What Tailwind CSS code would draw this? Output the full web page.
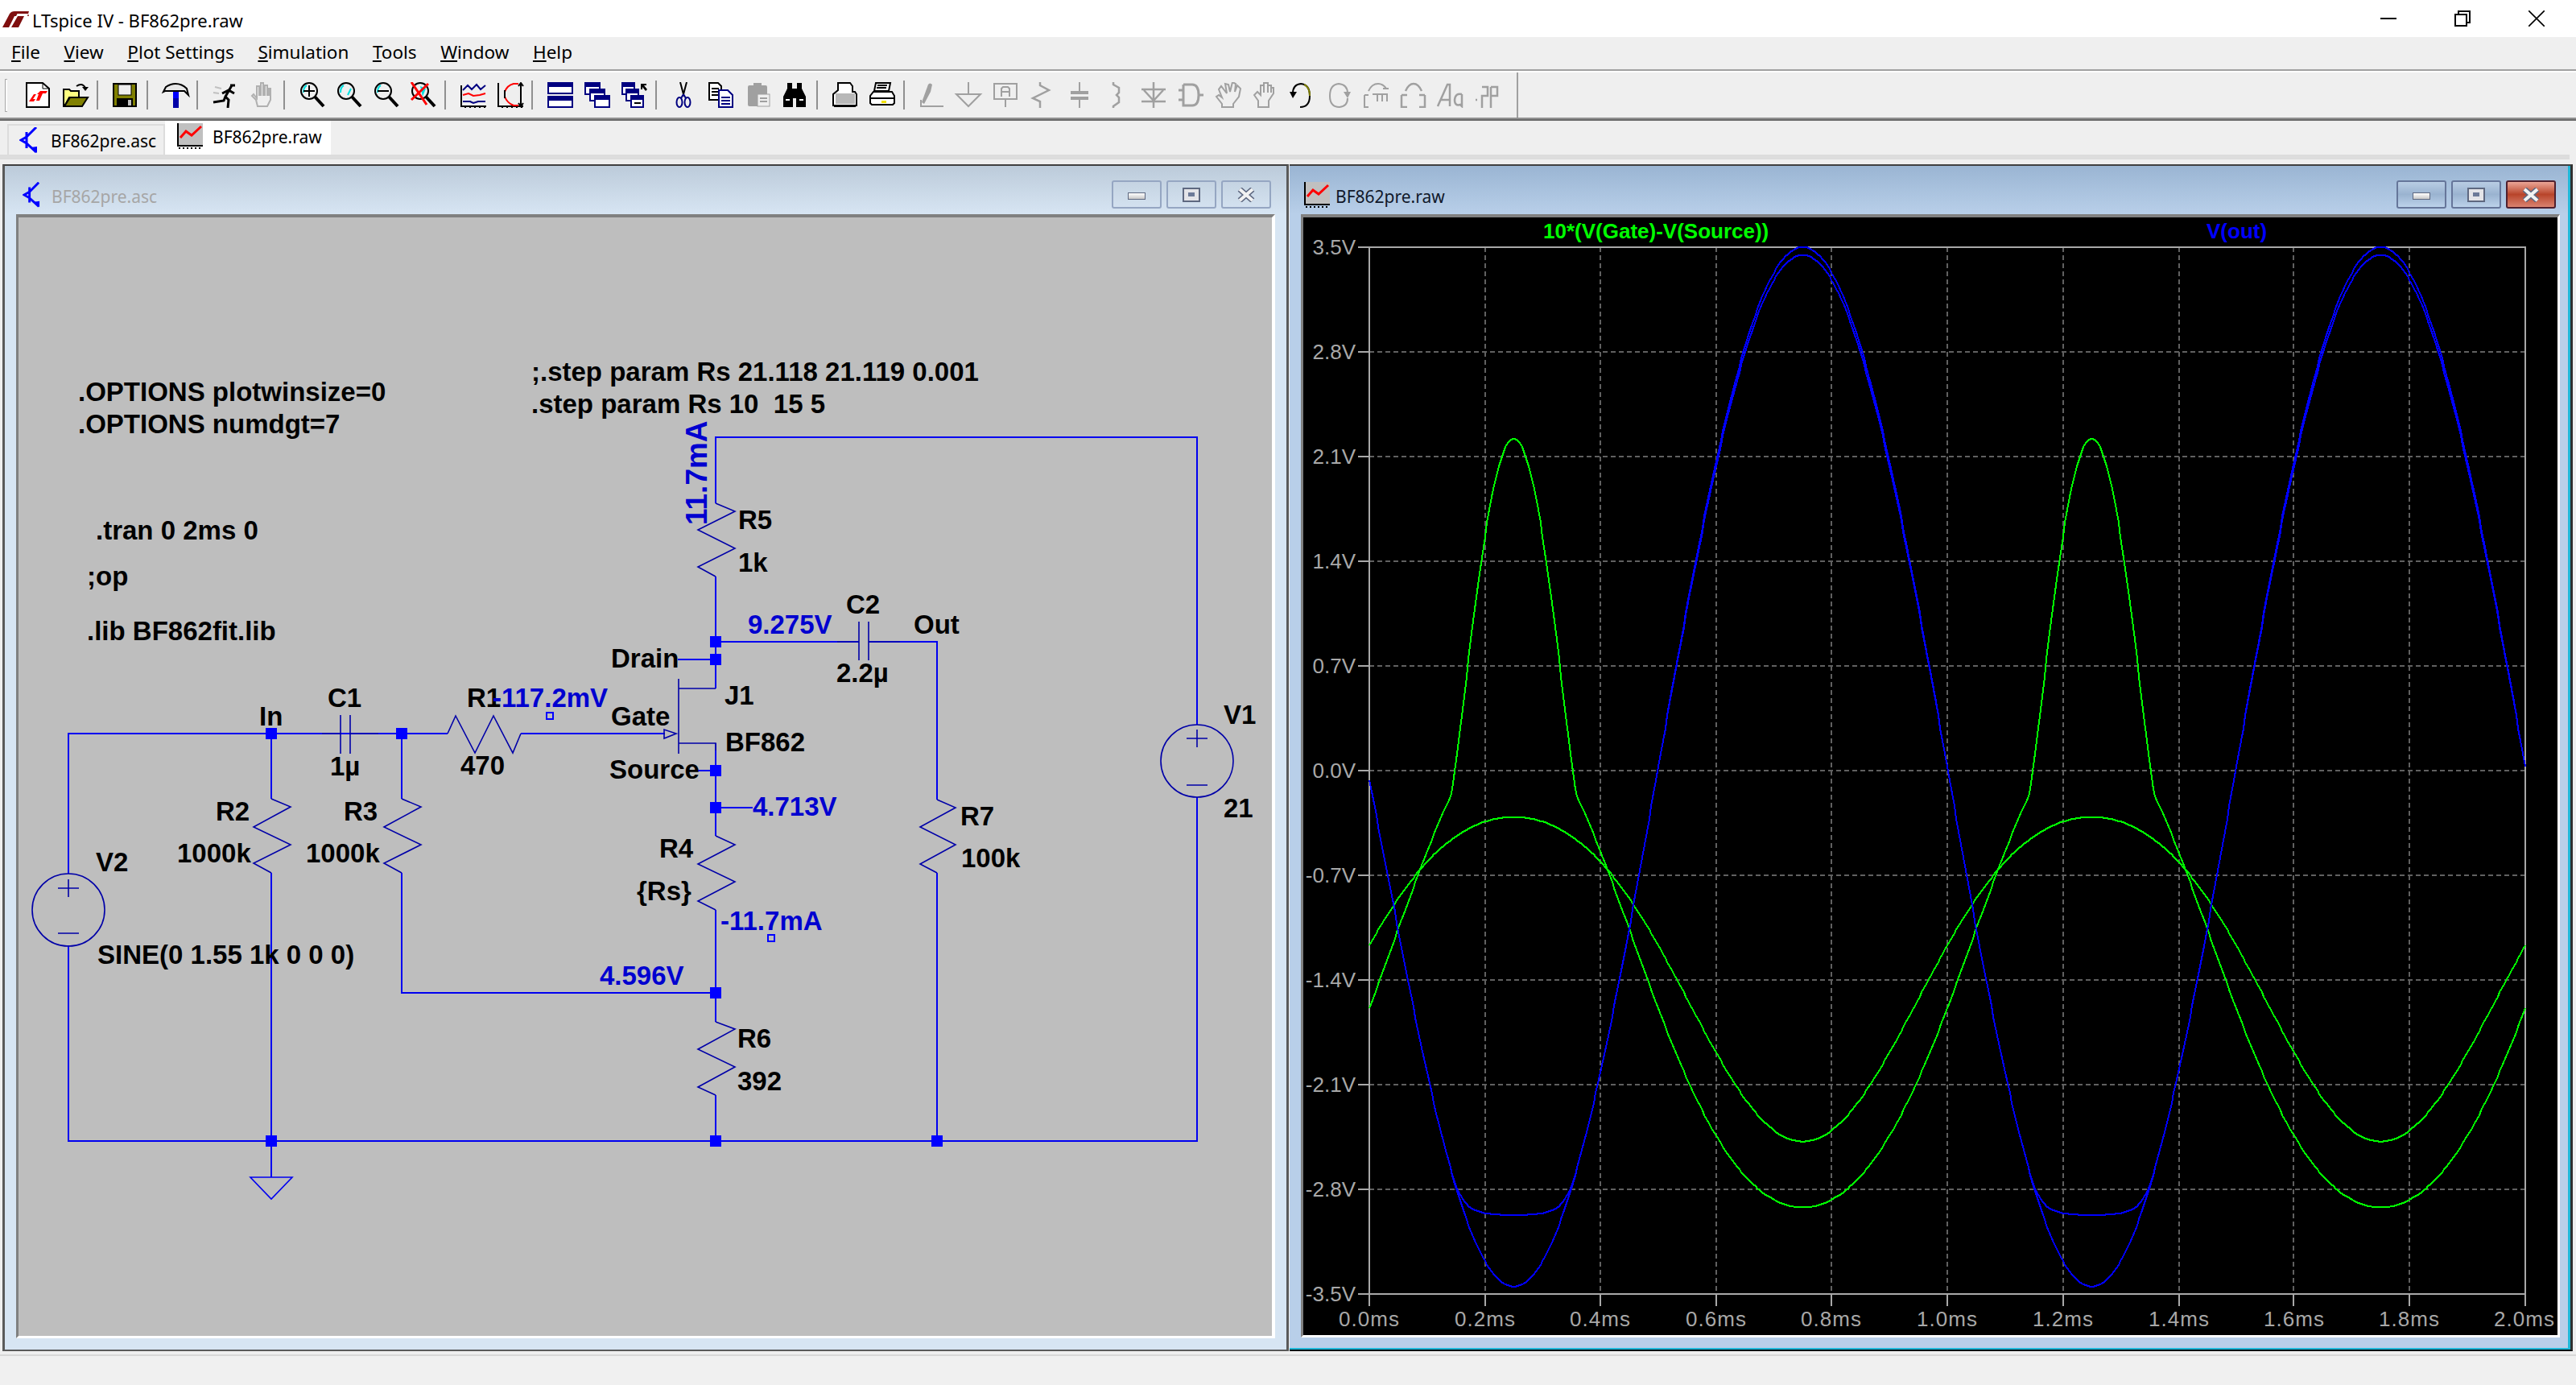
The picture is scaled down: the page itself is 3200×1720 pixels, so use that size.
<!DOCTYPE html>
<html>
<head>
<meta charset="utf-8">
<title>LTspice IV - BF862pre.raw</title>
<script src="https://cdn.jsdelivr.net/npm/@tailwindcss/browser@4"></script>
</head>
<body class="w-[3200px] h-[1720px] overflow-hidden bg-[#efefef] [font-family:'Noto_Sans','Liberation_Sans',sans-serif] text-black">
<svg width="0" height="0" class="absolute">
  <defs>
    <symbol id="tr" viewBox="0 0 24 32"><path d="M21 0L9 12M9 6V26M9 12L2 16L9 20L21 31" fill="none" stroke="#0000ff" stroke-width="3"/><path d="M14 25L22 32V24Z" fill="#0000ff"/></symbol>
    <symbol id="pl" viewBox="0 0 32 32"><rect x="2" y="0" width="30" height="28" fill="#c0c0c0"/><path d="M1 0V28H32M1 4H0M1 10H0M1 16H0M1 22H0" fill="none" stroke="#000" stroke-width="2"/><path d="M3 30V32M8 30V32M13 30V32M18 30V32M23 30V32M28 30V32" stroke="#000" stroke-width="2"/><path d="M4 18L11 10L18 15L30 4" fill="none" stroke="#f00" stroke-width="3"/></symbol>
  </defs>
</svg>

<div class="flex flex-col h-full">
  <!-- title bar -->
  <div class="h-[46px] shrink-0 bg-white flex items-center pl-[3px]">
    <svg class="w-[33px] h-[20px] mt-[2px]" viewBox="0 0 33 20"><path d="M0 20L9 3Q11 0 15 0H20L17 6H15L8 20ZM11 20L19 6H33L32 3H17L19 0H33L31 6H27L20 20Z" fill="#7f0f0f"/></svg>
    <span class="ml-[4px] mt-[3px] text-[22px] leading-none">LTspice IV - BF862pre.raw</span>
    <div class="ml-auto flex pr-[3px]">
      <div class="w-[92px] h-[46px] flex items-center justify-center"><div class="w-5 h-[2px] bg-black"></div></div>
      <div class="w-[92px] h-[46px] flex items-center justify-center"><svg class="w-5 h-5" viewBox="0 0 20 20"><path d="M5 4V1H19V15H16M1 5H15V19H1Z" fill="none" stroke="#000" stroke-width="2"/></svg></div>
      <div class="w-[92px] h-[46px] flex items-center justify-center"><svg class="w-5 h-5" viewBox="0 0 20 20"><path d="M0 0L20 20M20 0L0 20" stroke="#000" stroke-width="1.6"/></svg></div>
    </div>
  </div>
  <!-- menu -->
  <div class="h-10 shrink-0 flex items-center pl-[14px] pb-[2px] gap-[29.5px] text-[22.5px] leading-none">
    <span><u>F</u>ile</span><span><u>V</u>iew</span><span><u>P</u>lot Settings</span><span><u>S</u>imulation</span><span><u>T</u>ools</span><span><u>W</u>indow</span><span><u>H</u>elp</span>
  </div>
  <div class="h-[2px] shrink-0 bg-[#a0a0a0]"></div>
  <div class="h-[2px] shrink-0 bg-white"></div>
  <!-- toolbar -->
  <div class="h-14 shrink-0 flex">
    <div class="w-[1886px] flex items-center border-r-2 border-[#a0a0a0]">
      <div class="ml-[6px] mr-[15.5px] w-[3px] h-[41px] border-l border-b border-t border-[#a8a8a8] bg-white"></div>

      <svg class="w-[46px] h-8 shrink-0" viewBox="-7 0 46 32"><path d="M1 1H21L29 8V31H1Z" fill="#fff" stroke="#000" stroke-width="2"/><path d="M21 1V8H29" fill="none" stroke="#000"/><path d="M4 24L10 15H14L18 11H27L25 14H21L17 23H13L16 15H13L9 21H12L10 24Z" fill="#f00"/></svg>
      <svg class="w-[46px] h-8 shrink-0" viewBox="-7 0 46 32"><path d="M1 30V9H8L10 11H20V19H8L2 30Z" fill="#ffff80" stroke="#000" stroke-width="2"/><path d="M2 30L9 19H31L24 30Z" fill="#808000" stroke="#000" stroke-width="2"/><path d="M17 5Q24 0 28 7" fill="none" stroke="#000" stroke-width="2"/><path d="M24 6H32L28 11Z" fill="#000"/></svg>
      <div class="ml-[3px] mr-[11px] w-[2px] h-9 bg-[#909090]"></div>
      <svg class="w-[46px] h-8 shrink-0" viewBox="-7 0 46 32"><rect x="1" y="2" width="28" height="28" fill="#808000" stroke="#000" stroke-width="2"/><rect x="7" y="3" width="16" height="13" fill="#efefef" stroke="#000"/><rect x="5" y="20" width="20" height="10" fill="#000"/><rect x="19" y="22" width="4" height="7" fill="#c0c0c0"/></svg>
      <div class="ml-[3px] mr-[11px] w-[2px] h-9 bg-[#909090]"></div>
      <svg class="w-[46px] h-8 shrink-0" viewBox="-7 0 46 32"><path d="M1 12L4 6Q10 2 16 2Q24 2 30 8L32 16L27 11H3Z" fill="#e8e8e8" stroke="#000" stroke-width="2"/><rect x="13" y="12" width="7" height="8" fill="#0000ff"/><rect x="13" y="20" width="7" height="12" fill="#0000a8"/></svg>
      <div class="ml-[3px] mr-[11px] w-[2px] h-9 bg-[#909090]"></div>
      <svg class="w-[46px] h-8 shrink-0" viewBox="-7 0 46 32"><path d="M3 6L11 8M1 13L8 14" stroke="#c0c0c0" stroke-width="2"/><path d="M22 4H28M24 4L16 18L14 23L1 25M16 18L20 22L19 32M12 14L20 10L27 14" fill="none" stroke="#000" stroke-width="3"/></svg>
      <svg class="w-[46px] h-8 shrink-0" viewBox="-7 0 46 32"><path d="M3 17L8 22L10 30H22L26 22V8H24V16H22V4H19V16H17V1H14V16H12V5H9V20L5 15Z" fill="none" stroke="#b0b0b0" stroke-width="2"/></svg>
      <div class="ml-[3px] mr-[11px] w-[2px] h-9 bg-[#909090]"></div>
      <svg class="w-[46px] h-8 shrink-0" viewBox="-7 0 46 32"><circle cx="12" cy="11" r="10" fill="none" stroke="#000" stroke-width="2"/><path d="M5 13Q5 6 9 4" fill="none" stroke="#00e0e0" stroke-width="2"/><path d="M12 4V18M5 11H19" stroke="#000" stroke-width="2"/><path d="M19 18L30 30" stroke="#000" stroke-width="4"/></svg>
      <svg class="w-[46px] h-8 shrink-0" viewBox="-7 0 46 32"><circle cx="12" cy="11" r="10" fill="none" stroke="#000" stroke-width="2"/><path d="M5 13Q5 6 9 4M14 16L18 8" fill="none" stroke="#00e0e0" stroke-width="2"/><path d="M19 18L30 30" stroke="#000" stroke-width="4"/></svg>
      <svg class="w-[46px] h-8 shrink-0" viewBox="-7 0 46 32"><circle cx="12" cy="11" r="10" fill="none" stroke="#000" stroke-width="2"/><path d="M5 13Q5 6 9 4" fill="none" stroke="#00e0e0" stroke-width="2"/><path d="M5 11H19" stroke="#000" stroke-width="2"/><path d="M19 18L30 30" stroke="#000" stroke-width="4"/></svg>
      <svg class="w-[46px] h-8 shrink-0" viewBox="-7 0 46 32"><circle cx="12" cy="11" r="10" fill="none" stroke="#000" stroke-width="2"/><path d="M12 5L19 8L15 18Z" fill="#00e0e0"/><path d="M19 18L30 30" stroke="#000" stroke-width="4"/><path d="M1 0L20 28M22 2L1 22" stroke="#f00" stroke-width="3"/></svg>
      <div class="ml-[3px] mr-[11px] w-[2px] h-9 bg-[#909090]"></div>
      <svg class="w-[46px] h-8 shrink-0" viewBox="-7 0 46 32"><path d="M1 4V30H32M0 8H1M0 15H1M0 22H1M6 31V32M12 31V32M18 31V32M24 31V32M30 31V32" fill="none" stroke="#000" stroke-width="2"/><path d="M3 10L9 4L14 9L20 3L25 9L31 4" fill="none" stroke="#000080" stroke-width="2"/><path d="M3 16L10 14L16 17L24 16L31 14" fill="none" stroke="#f00" stroke-width="2"/><path d="M3 24H12L16 26L22 24H31" fill="none" stroke="#000080" stroke-width="2"/></svg>
      <svg class="w-[46px] h-8 shrink-0" viewBox="-7 0 46 32"><path d="M1 1V30H32M0 6H1M0 14H1M0 22H1M6 31V32M12 31V32M18 31V32M24 31V32M30 31V32" fill="none" stroke="#000" stroke-width="2"/><path d="M9 12Q12 4 20 2H26M9 18Q12 26 20 29H26" fill="none" stroke="#f00" stroke-width="2"/><path d="M29 2V29M26 5L29 1L32 5M26 26L29 30L32 26M9 10V20" fill="none" stroke="#000" stroke-width="2"/></svg>
      <div class="ml-[3px] mr-[11px] w-[2px] h-9 bg-[#909090]"></div>
      <svg class="w-[46px] h-8 shrink-0" viewBox="-7 0 46 32"><rect x="1" y="1" width="30" height="13" fill="#fff" stroke="#000080" stroke-width="2"/><rect x="1" y="1" width="30" height="5" fill="#000080"/><rect x="1" y="18" width="30" height="13" fill="#fff" stroke="#000080" stroke-width="2"/><rect x="1" y="18" width="30" height="5" fill="#000080"/></svg>
      <svg class="w-[46px] h-8 shrink-0" viewBox="-7 0 46 32"><rect x="1" y="1" width="18" height="14" fill="#fff" stroke="#000080" stroke-width="2"/><rect x="1" y="1" width="18" height="5" fill="#000080"/><rect x="7" y="9" width="18" height="14" fill="#fff" stroke="#000080" stroke-width="2"/><rect x="7" y="9" width="18" height="5" fill="#000080"/><rect x="13" y="17" width="18" height="14" fill="#fff" stroke="#000080" stroke-width="2"/><rect x="13" y="17" width="18" height="5" fill="#000080"/></svg>
      <svg class="w-[46px] h-8 shrink-0" viewBox="-7 0 46 32"><rect x="1" y="1" width="15" height="14" fill="#fff" stroke="#000080" stroke-width="2"/><rect x="1" y="1" width="15" height="5" fill="#000080"/><rect x="6" y="9" width="15" height="14" fill="#fff" stroke="#000080" stroke-width="2"/><rect x="6" y="9" width="15" height="5" fill="#000080"/><rect x="12" y="17" width="15" height="14" fill="#fff" stroke="#000080" stroke-width="2"/><rect x="12" y="17" width="15" height="5" fill="#000080"/><path d="M16 26H24" stroke="#000" stroke-width="2"/><path d="M24 2H31V4H28L32 9L30 11L26 6V9H24Z" fill="#000"/></svg>
      <div class="ml-[3px] mr-[11px] w-[2px] h-9 bg-[#909090]"></div>
      <svg class="w-[46px] h-8 shrink-0" viewBox="-7 0 46 32"><path d="M11 0L15 15L19 0" fill="none" stroke="#000" stroke-width="2"/><path d="M15 15L12 20M15 15L18 20" stroke="#000080" stroke-width="2"/><ellipse cx="10" cy="25" rx="3.5" ry="6" fill="none" stroke="#000080" stroke-width="2"/><ellipse cx="20" cy="25" rx="3.5" ry="6" fill="none" stroke="#000080" stroke-width="2"/></svg>
      <svg class="w-[46px] h-8 shrink-0" viewBox="-7 0 46 32"><path d="M1 1H12L16 5V22H1Z" fill="#fff" stroke="#000" stroke-width="2"/><path d="M4 8H13M4 12H13M4 16H13" stroke="#000" stroke-width="2"/><path d="M13 10H24L30 16V31H13Z" fill="#fff" stroke="#000080" stroke-width="2"/><path d="M16 19H27M16 23H27M16 27H27" stroke="#000080" stroke-width="2"/></svg>
      <svg class="w-[46px] h-8 shrink-0" viewBox="-7 0 46 32"><path d="M5 4H10V1H20V4H25Q27 4 27 6V28Q27 30 25 30H5Q3 30 3 28V6Q3 4 5 4Z" fill="#a0a0a0"/><rect x="15" y="15" width="15" height="15" fill="#efefef" stroke="#a0a0a0"/><path d="M18 20H27M18 24H27" stroke="#a0a0a0" stroke-width="2"/></svg>
      <svg class="w-[46px] h-8 shrink-0" viewBox="-7 0 46 32"><path d="M6 1H12V8H18V1H24V8L29 18V31H17V20H13V31H1V18L6 8Z" fill="#000"/><path d="M4 22H9M21 22H26" stroke="#fff" stroke-width="2"/></svg>
      <div class="ml-[3px] mr-[11px] w-[2px] h-9 bg-[#909090]"></div>
      <svg class="w-[46px] h-8 shrink-0" viewBox="-7 0 46 32"><path d="M7 1H22L25 5V12H28L30 15V29H1V15L7 10Z" fill="#fff" stroke="#000" stroke-width="2"/><rect x="4" y="14" width="24" height="13" fill="#b8b8b8"/><path d="M2 30H29" stroke="#000" stroke-width="2"/></svg>
      <svg class="w-[46px] h-8 shrink-0" viewBox="-7 0 46 32"><path d="M8 1H26L24 11H6Z" fill="#fff" stroke="#000" stroke-width="2"/><path d="M10 4H22M9 7H21" stroke="#000" stroke-width="2"/><path d="M5 12H28L31 17V26L29 28H3L1 26V17Z" fill="#fff" stroke="#000" stroke-width="2"/><path d="M2 20H30" stroke="#000" stroke-width="2"/><rect x="15" y="23" width="6" height="3" fill="#f0e000"/></svg>
      <div class="ml-[3px] mr-[11px] w-[2px] h-9 bg-[#909090]"></div>
      <svg class="w-[46px] h-8 shrink-0" viewBox="-7 0 46 32"><path d="M3 25L11 3Q13 0 16 3L14 12L6 27Z" fill="#a0a0a0"/><path d="M2 22V30H30" fill="none" stroke="#a0a0a0" stroke-width="2"/></svg>
      <svg class="w-[46px] h-8 shrink-0" viewBox="-7 0 46 32"><path d="M15 0V14M0 15H30L15 30Z" fill="none" stroke="#a0a0a0" stroke-width="2"/></svg>
      <svg class="w-[46px] h-8 shrink-0" viewBox="-7 0 46 32"><rect x="1" y="2" width="28" height="19" fill="none" stroke="#a0a0a0" stroke-width="2"/><path d="M15 21V31M10 18V8L12 6H18L20 8V18M10 12H20" fill="none" stroke="#a0a0a0" stroke-width="2"/></svg>
      <svg class="w-[46px] h-8 shrink-0" viewBox="-7 0 46 32"><path d="M12 0V4L23 10L3 20L12 24V32" fill="none" stroke="#a0a0a0" stroke-width="2.5"/></svg>
      <svg class="w-[46px] h-8 shrink-0" viewBox="-7 0 46 32"><path d="M15 0V11M15 21V32" stroke="#a0a0a0" stroke-width="2"/><rect x="4" y="11" width="22" height="4" fill="#a0a0a0"/><rect x="4" y="18" width="22" height="4" fill="#a0a0a0"/></svg>
      <svg class="w-[46px] h-8 shrink-0" viewBox="-7 0 46 32"><path d="M11 0V3L18 7V13L15 16L18 19V25L11 30V32" fill="none" stroke="#a0a0a0" stroke-width="2.5"/></svg>
      <svg class="w-[46px] h-8 shrink-0" viewBox="-7 0 46 32"><path d="M15 0V32M0 9H30M0 24H30M3 10L15 23L27 10" fill="none" stroke="#a0a0a0" stroke-width="2.5"/></svg>
      <svg class="w-[46px] h-8 shrink-0" viewBox="-7 0 46 32"><path d="M0 10H6M0 22H6M6 3V29H17Q25 29 25 16Q25 3 17 3H6M25 16H31" fill="none" stroke="#a0a0a0" stroke-width="3"/></svg>
      <svg class="w-[46px] h-8 shrink-0" viewBox="-7 0 46 32"><path d="M1 18L8 27V31H22V27L29 18L31 8L27 4L24 12L25 2L21 0L18 12L16 3L12 2L14 14L7 5L4 9L8 19L4 16Z" fill="none" stroke="#a0a0a0" stroke-width="2"/></svg>
      <svg class="w-[46px] h-8 shrink-0" viewBox="-7 0 46 32"><path d="M2 16L7 23V31H20V23L26 14V7H23V13V4H19V13V1H14V13V4H10V16L6 12Z" fill="none" stroke="#a0a0a0" stroke-width="2"/></svg>
      <svg class="w-[46px] h-8 shrink-0" viewBox="-7 0 46 32"><path d="M4 14Q4 3 14 2Q25 3 25 17Q25 31 13 31" fill="none" stroke="#000" stroke-width="2"/><path d="M18 3Q25 6 25 17" fill="none" stroke="#808000" stroke-width="2"/><path d="M0 12H9L4 20Z" fill="#000"/></svg>
      <svg class="w-[46px] h-8 shrink-0" viewBox="-7 0 46 32"><path d="M26 14Q26 3 15 2Q4 3 4 17Q4 31 16 31Q26 30 26 20" fill="none" stroke="#a0a0a0" stroke-width="2"/><path d="M30 12H21L26 20Z" fill="#a0a0a0"/></svg>
      <svg class="w-[46px] h-8 shrink-0" viewBox="-7 0 46 32"><path d="M6 11Q10 2 18 2Q24 2 28 8M24 8H31M1 16V32M1 16H6M1 31H6M11 15H29V24M17 15V24M23 15V24" fill="none" stroke="#a0a0a0" stroke-width="2"/></svg>
      <svg class="w-[46px] h-8 shrink-0" viewBox="-7 0 46 32"><path d="M6 11Q10 2 16 2Q22 2 26 11M1 16V32M1 16H8M1 31H8M30 16V32M30 16H23M30 31H23" fill="none" stroke="#a0a0a0" stroke-width="2.5"/></svg>
      <svg class="w-[46px] h-8 shrink-0" viewBox="-7 0 46 32"><path d="M0 30L12 3H15V30M3 22H15" fill="none" stroke="#a0a0a0" stroke-width="2.5"/><path d="M30 15Q22 13 21 22Q21 30 28 28L30 30V15" fill="none" stroke="#a0a0a0" stroke-width="2.5"/></svg>
      <svg class="w-[46px] h-8 shrink-0" viewBox="-7 0 46 32"><path d="M1 22H3M9 6H16V17H9V32M20 6H28V17H20M20 6V32" fill="none" stroke="#a0a0a0" stroke-width="2.5"/></svg>
    </div>
  </div>
  <div class="h-1 shrink-0 bg-[#6a6a6a] border-t-2 border-[#909090]"></div>
  <!-- tabs -->
  <div class="h-[42px] shrink-0 flex items-end pl-[9px] overflow-hidden">
    <div class="w-[196px] h-[38px] border-t-2 border-l-2 border-r-2 border-[#dcdcdc] flex items-center pl-[13px] gap-[15px] text-[21px] leading-none pt-[2px]">
      <svg class="w-6 h-8 shrink-0 -mt-[2px]"><use href="#tr"/></svg><span>BF862pre.asc</span>
    </div>
    <div class="w-[206px] h-[42px] bg-white flex items-center pl-[15px] gap-[12px] text-[21px] leading-none pb-[2px]">
      <svg class="w-8 h-8 shrink-0 -mt-[2px]"><use href="#pl"/></svg><span>BF862pre.raw</span>
    </div>
  </div>
  <div class="h-[6px] shrink-0 w-[3192px] bg-[#dddddd] border-y-2 border-[#dcdcdc]"></div>
  <div class="h-[6px] shrink-0"></div>

  <!-- MDI -->
  <div class="h-[1474px] shrink-0 flex items-stretch">
    <!-- schematic window -->
    <div class="ml-[3px] w-[1598px] flex flex-col border-l-[3px] border-t-2 border-r-[3px] border-b-2 border-[#5a5a5a] border-t-[#404040] bg-[#d7e5f3]">
      <div class="h-[60px] shrink-0 flex items-start bg-gradient-to-b from-[#bccbda] to-[#d7e5f3] pl-[22px] pr-[19px] pt-[18px]">
        <svg class="w-[23px] h-8 shrink-0 mt-[2px]"><use href="#tr"/></svg>
        <span class="ml-[13px] mt-[10px] text-[21px] leading-none text-[#a6a6a6]">BF862pre.asc</span>
        <div class="ml-auto flex gap-[6px]">
          <div class="w-[62px] h-[35px] rounded-[3px] border-2 border-[#95a6c2] flex items-end justify-center pb-[9px]"><div class="w-[22px] h-[9px] bg-gradient-to-b from-white to-[#c8c8c8] border border-[#5e6880]"></div></div>
          <div class="w-[62px] h-[35px] rounded-[3px] border-2 border-[#95a6c2] flex items-center justify-center"><div class="w-[22px] h-[18px] bg-[#e4e4e8] border-2 border-[#5e6880] flex items-center justify-center"><div class="w-2 h-[5px] bg-[#6d7a98]"></div></div></div>
          <div class="w-[62px] h-[35px] rounded-[3px] border-2 border-[#95a6c2] flex items-center justify-center"><svg class="w-[22px] h-[18px]" viewBox="0 0 22 18"><path d="M3 2L19 16M19 2L3 16" stroke="#5e6880" stroke-width="7"/><path d="M3 2L19 16M19 2L3 16" stroke="#f2f2f2" stroke-width="4"/></svg></div>
        </div>
      </div>
      <div class="ml-[14px] w-[1564px] h-[1396px] shrink-0 border-t-4 border-l-[3px] border-[#808080] border-r-4 border-b-[3px] border-r-white border-b-white">
        <svg class="block w-[1557px] h-[1389px] bg-[#bebebe]" viewBox="23 270 1557 1389">
          <!-- wires -->
          <g fill="none" stroke="#0000f0" stroke-width="2">
            <path d="M85 1085V911H556M647 911H826"/>
            <path d="M337 911V992M337 1084V1462"/>
            <path d="M499 911V992M499 1084V1233H889"/>
            <path d="M889 625V543H1487V900M1487 990V1417H85V1174"/>
            <path d="M889 716V855M842 819H889"/>
            <path d="M889 923V1038M866 957H889M889 1003H935M889 1130V1269M889 1360V1417"/>
            <path d="M889 797H1067M1079 797H1164V993M1164 1084V1417"/>
          </g>
          <!-- components -->
          <g fill="none" stroke="#0000a8" stroke-width="1.6">
            <path d="M556 911L566 889L590 935L613 889L637 935L647 911"/>
            <path d="M423 888V936M435 888V936M400 911H423M435 911H470"/>
            <path d="M337 992L361 1002L315 1027L361 1049L315 1072L337 1084"/>
            <path d="M499 992L523 1002L477 1027L523 1049L477 1072L499 1084"/>
            <path d="M889 625L913 635L867 658L913 681L867 704L889 716"/>
            <path d="M889 1038L913 1049L867 1073L913 1095L867 1119L889 1130"/>
            <path d="M889 1269L913 1278L867 1303L913 1325L867 1350L889 1360"/>
            <path d="M1164 993L1187 1003L1143 1027L1187 1049L1143 1073L1164 1084"/>
            <path d="M1067 772V820M1079 772V820M1040 797H1067M1079 797H1118"/>
            <path d="M843 843V936M843 855H889M843 923H889V932"/>
            <path d="M825 906V917L840 911Z"/>
            <circle cx="85" cy="1130" r="45"/>
            <circle cx="1487" cy="945" r="45"/>
            <path d="M72 1103H98M85 1092V1114M72 1159H98"/>
            <path d="M1474 917H1500M1487 906V928M1474 975H1500"/>
          </g>
          <path d="M311 1462H363L337 1489Z" fill="none" stroke="#0000f0" stroke-width="1.6"/>
          <!-- nodes -->
          <g fill="#0000ff">
            <rect x="330" y="904" width="14" height="14"/><rect x="492" y="904" width="14" height="14"/>
            <rect x="882" y="790" width="14" height="14"/><rect x="882" y="812" width="14" height="14"/>
            <rect x="882" y="950" width="14" height="14"/><rect x="882" y="996" width="14" height="14"/>
            <rect x="882" y="1226" width="14" height="14"/><rect x="330" y="1410" width="14" height="14"/>
            <rect x="882" y="1410" width="14" height="14"/><rect x="1157" y="1410" width="14" height="14"/>
          </g>
          <rect x="679" y="885" width="8" height="8" fill="none" stroke="#0000ff" stroke-width="2"/>
          <rect x="954" y="1161" width="8" height="8" fill="none" stroke="#0000ff" stroke-width="2"/>
          <!-- labels -->
          <g class="[font-family:'Liberation_Sans',sans-serif] font-bold text-[33px] fill-black">
            <text x="97" y="498">.OPTIONS plotwinsize=0</text>
            <text x="97" y="538">.OPTIONS numdgt=7</text>
            <text x="119" y="670">.tran 0 2ms 0</text>
            <text x="108" y="727">;op</text>
            <text x="108" y="795">.lib BF862fit.lib</text>
            <text x="660" y="473">;.step param Rs 21.118 21.119 0.001</text>
            <text x="660" y="513">.step param Rs 10&#160; 15 5</text>
            <text x="407" y="878">C1</text>
            <text x="580" y="878">R1</text>
            <text x="322" y="901">In</text>
            <text x="410" y="963">1µ</text>
            <text x="572" y="962">470</text>
            <text x="917" y="657">R5</text>
            <text x="917" y="710">1k</text>
            <text x="1051" y="762">C2</text>
            <text x="1135" y="787">Out</text>
            <text x="759" y="829">Drain</text>
            <text x="1039" y="847">2.2µ</text>
            <text x="900" y="875">J1</text>
            <text x="759" y="901">Gate</text>
            <text x="901" y="933">BF862</text>
            <text x="757" y="967">Source</text>
            <text x="819" y="1065">R4</text>
            <text x="791" y="1118">{Rs}</text>
            <text x="1193" y="1025">R7</text>
            <text x="1194" y="1077">100k</text>
            <text x="119" y="1082">V2</text>
            <text x="268" y="1019">R2</text>
            <text x="220" y="1071">1000k</text>
            <text x="427" y="1019">R3</text>
            <text x="380" y="1071">1000k</text>
            <text x="121" y="1197">SINE(0 1.55 1k 0 0 0)</text>
            <text x="916" y="1301">R6</text>
            <text x="916" y="1354">392</text>
            <text x="1520" y="899">V1</text>
            <text x="1520" y="1015">21</text>
          </g>
          <g class="[font-family:'Liberation_Sans',sans-serif] font-bold text-[33px] fill-[#0000d0]">
            <text x="612" y="878">-117.2mV</text>
            <text x="929" y="787">9.275V</text>
            <text x="935" y="1013">4.713V</text>
            <text x="895" y="1155">-11.7mA</text>
            <text x="745" y="1223">4.596V</text>
            <text x="878" y="652" transform="rotate(-90 878 652)" class="text-[37px]">11.7mA</text>
          </g>
        </svg>
      </div>
    </div>

    <!-- waveform window -->
    <div class="ml-px w-[1594px] flex border-t-2 border-r-[3px] border-b-2 border-[#303030] border-t-[#404040] border-b-black">
      <div class="w-[1591px] flex flex-col border-r-[3px] border-b-2 border-[#1fb8d8] bg-[#b8cfe9]">
        <div class="h-[60px] shrink-0 flex items-start bg-gradient-to-b from-[#9ab5d3] to-[#b8cfe9] pl-[18px] pr-[15px] pt-[18px]">
          <svg class="w-8 h-8 shrink-0 mt-[2px]"><use href="#pl"/></svg>
          <span class="ml-[7px] mt-[10px] text-[21px] leading-none text-[#10182a]">BF862pre.raw</span>
          <div class="ml-auto flex gap-[6px]">
            <div class="w-[62px] h-[35px] rounded-[3px] border-2 border-[#66769a] bg-gradient-to-b from-[#b9cde4] via-[#9ab3d0] to-[#bcd2ea] flex items-end justify-center pb-[9px]"><div class="w-[22px] h-[9px] bg-gradient-to-b from-white to-[#c8c8c8] border border-[#5e6880]"></div></div>
            <div class="w-[62px] h-[35px] rounded-[3px] border-2 border-[#66769a] bg-gradient-to-b from-[#b9cde4] via-[#9ab3d0] to-[#bcd2ea] flex items-center justify-center"><div class="w-[22px] h-[18px] bg-[#e4e4e8] border-2 border-[#5e6880] flex items-center justify-center"><div class="w-2 h-[5px] bg-[#6d7a98]"></div></div></div>
            <div class="w-[62px] h-[35px] rounded-[3px] border-2 border-[#50202e] bg-gradient-to-b from-[#eaa596] via-[#b8442a] to-[#d9826f] flex items-center justify-center"><svg class="w-[22px] h-[18px]" viewBox="0 0 22 18"><path d="M3 2L19 16M19 2L3 16" stroke="#5e6880" stroke-width="7"/><path d="M3 2L19 16M19 2L3 16" stroke="#f2f2f2" stroke-width="4"/></svg></div>
          </div>
        </div>
        <div class="ml-[14px] w-[1564px] h-[1395px] shrink-0 border-t-4 border-l-[3px] border-[#808080] border-r-[3px] border-b-[3px] border-r-white border-b-white">
          <svg class="block w-[1558px] h-[1388px] bg-black" viewBox="1619 270 1558 1388">
            <!-- dashed grid -->
            <g fill="none" stroke="#606060" stroke-width="2" stroke-dasharray="6 4" shape-rendering="crispEdges">
              <path d="M1845 307V1607M1988 307V1607M2132 307V1607M2275 307V1607M2419 307V1607M2563 307V1607M2707 307V1607M2849 307V1607M2993 307V1607"/>
              <path d="M1701 437H3137M1701 567H3137M1701 697H3137M1701 827H3137M1701 957H3137M1701 1087H3137M1701 1217H3137M1701 1347H3137M1701 1477H3137"/>
            </g>
            <!-- axes -->
            <g fill="none" stroke="#a8a8a8" stroke-width="2" shape-rendering="crispEdges">
              <path d="M1687 307H3137V1622M1701 307V1622M1687 1607H3137"/>
              <path d="M1687 437H1701M1687 567H1701M1687 697H1701M1687 827H1701M1687 957H1701M1687 1087H1701M1687 1217H1701M1687 1347H1701M1687 1477H1701"/>
              <path d="M1845 1607V1622M1988 1607V1622M2132 1607V1622M2275 1607V1622M2419 1607V1622M2563 1607V1622M2707 1607V1622M2849 1607V1622M2993 1607V1622"/>
            </g>
            <!-- traces -->
            <g fill="none" stroke-width="2" shape-rendering="crispEdges">
              <path id="ga" stroke="#00ff00"/>
              <path id="gb" stroke="#00ff00"/>
              <path id="ba" stroke="#0000ff"/>
              <path id="bb" stroke="#0000ff"/>
            </g>
            <g class="[font-family:'Liberation_Sans',sans-serif] text-[26px] fill-[#a8a8a8]" text-anchor="end">
              <text x="1684" y="316">3.5V</text><text x="1684" y="446">2.8V</text><text x="1684" y="576">2.1V</text><text x="1684" y="706">1.4V</text><text x="1684" y="836">0.7V</text><text x="1684" y="966">0.0V</text><text x="1684" y="1096">-0.7V</text><text x="1684" y="1226">-1.4V</text><text x="1684" y="1356">-2.1V</text><text x="1684" y="1486">-2.8V</text><text x="1684" y="1616">-3.5V</text>
            </g>
            <g class="[font-family:'Liberation_Sans',sans-serif] text-[26px] tracking-[1px] fill-[#a8a8a8]" text-anchor="middle">
              <text x="1701" y="1647">0.0ms</text><text x="1845" y="1647">0.2ms</text><text x="1988" y="1647">0.4ms</text><text x="2132" y="1647">0.6ms</text><text x="2275" y="1647">0.8ms</text><text x="2419" y="1647">1.0ms</text><text x="2563" y="1647">1.2ms</text><text x="2707" y="1647">1.4ms</text><text x="2850" y="1647">1.6ms</text><text x="2993" y="1647">1.8ms</text><text x="3136" y="1647">2.0ms</text>
            </g>
            <g class="[font-family:'Liberation_Sans',sans-serif] font-bold text-[26px]">
              <text x="1917" y="296" class="fill-[#00ff00]">10*(V(Gate)-V(Source))</text>
              <text x="2741" y="296" class="fill-[#0000ff]">V(out)</text>
            </g>
          </svg>
        </div>
      </div>
    </div>
  </div>
  <div class="h-1 shrink-0"></div>
  <div class="h-[2px] shrink-0 bg-[#d8d8d8]"></div>
  <div class="h-9 shrink-0 bg-[#f0f0f0]"></div>
</div>

<script>
  var TAU = Math.PI * 2;
  function frac(t) { return t - Math.floor(t); }
  function outer(t) { return 0.025 - 3.475 * Math.sin(TAU * t) - 0.09 * Math.exp(-t / 0.03); }
  function inner(t) {
    var o = outer(t);
    if (o > 0) return o * 0.985;
    if (o > -2.6) return o;
    var d = -2.6 - o;
    return -2.6 - 0.38 * Math.tanh(d / 0.38);
  }
  function greenA(t) {
    var p = frac(t), d = Math.abs(p - 0.25);
    if (d < 0.107) return 2.22 - 280 * d * d + 6340 * d * d * d * d;
    return -1.447 + 1.617 * Math.sin(TAU * p) - 0.143 * Math.cos(2 * TAU * p);
  }
  function greenB(t) {
    var p = frac(t);
    return -1.2825 + 1.085 * Math.sin(TAU * p) + 0.1125 * Math.cos(2 * TAU * p);
  }
  function trace(id, f) {
    var d = '';
    for (var i = 0; i <= 500; i++) {
      var t = i * 0.004;
      var x = Math.round(1701 + 718 * t), y = Math.round(957 - 185.71 * f(t));
      d += (i ? 'L' : 'M') + x + ' ' + y;
    }
    document.getElementById(id).setAttribute('d', d);
  }
  trace('ga', greenA); trace('gb', greenB); trace('ba', outer); trace('bb', inner);
</script>
</body>
</html>
